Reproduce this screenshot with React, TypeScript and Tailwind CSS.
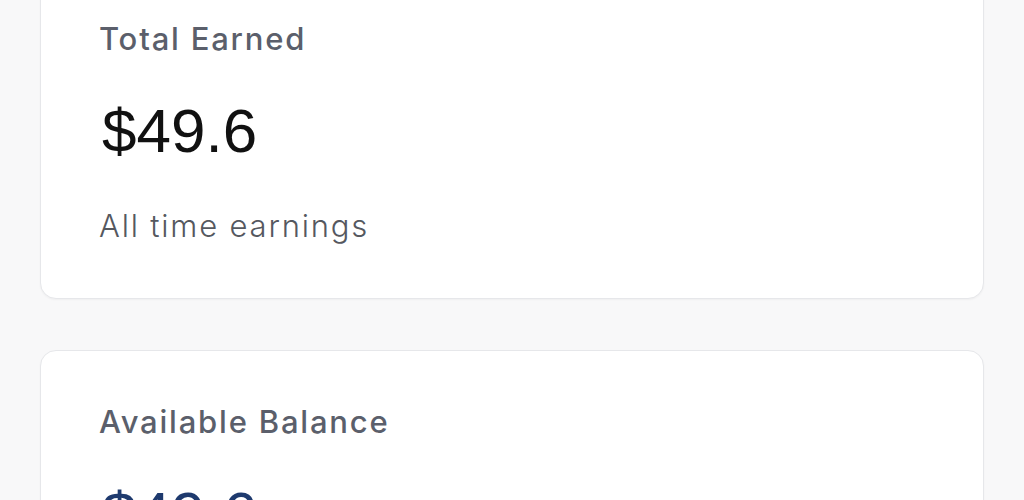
export default function App() {
  return (
    <div className="h-[500px] w-[1024px] overflow-hidden bg-[#f8f8f9]">
      <div className="-mt-[33px] flex flex-col gap-[51px] px-[40px]">
        <StatCard
          label="Total Earned"
          amount="$49.6"
          note="All time earnings"
          amountClass="text-[#111111]"
        />
        <StatCard
          label="Available Balance"
          amount="$49.6"
          note="Ready to withdraw"
          amountClass="text-[#1e3a6e]"
        />
      </div>
    </div>
  );
}

function StatCard({
  label,
  amount,
  note,
  amountClass,
}: {
  label: string;
  amount: string;
  note: string;
  amountClass: string;
}) {
  return (
    <div className="rounded-[16px] border border-[#e6e7ea] bg-white pl-[58px] pr-[60px] pt-[49px] pb-[50px] shadow-[0_1px_2px_rgba(0,0,0,0.04)]">
      <p className="font-['Inter',sans-serif] text-[31px] leading-[44px] font-medium tracking-[1.8px] text-[#5b5f6b]">
        {label}
      </p>
      <p
        className={`mt-[34px] pl-[3px] font-['Liberation_Sans',Arial,sans-serif] text-[62px] leading-[72px] ${amountClass}`}
      >
        {amount}
      </p>
      <p className="mt-[37px] font-['Inter',sans-serif] text-[31px] leading-[44px] font-light tracking-[1.8px] text-[#55585f]">
        {note}
      </p>
    </div>
  );
}
